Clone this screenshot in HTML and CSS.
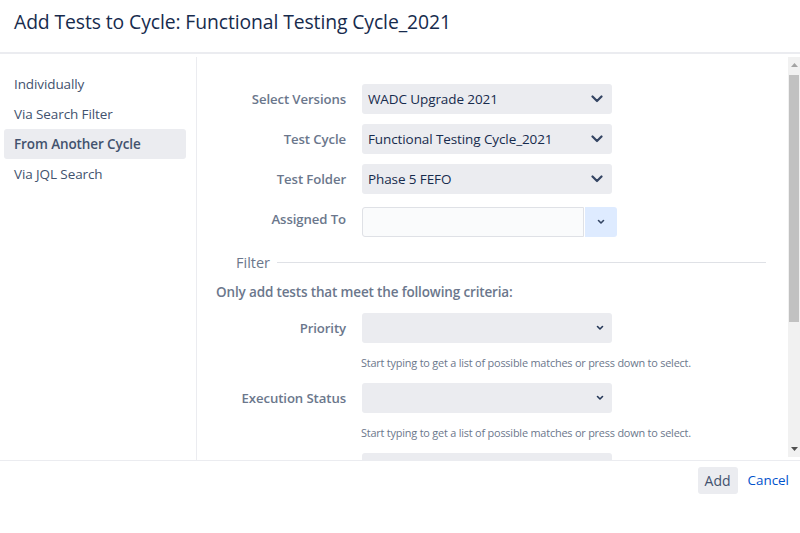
FILE: index.html
```html
<!DOCTYPE html>
<html>
<head>
<meta charset="utf-8">
<link rel="stylesheet" href="styles.css">
</head>
<body>
<div class="dialog">
  <header class="dlg-header">
    <h2 class="dlg-title">Add Tests to Cycle: Functional Testing Cycle_2021</h2>
  </header>
  <div class="dlg-body">
    <nav class="side">
      <a class="side-item">Individually</a>
      <a class="side-item">Via Search Filter</a>
      <a class="side-item active">From Another Cycle</a>
      <a class="side-item">Via JQL Search</a>
    </nav>
    <div class="panel">
      <div class="panel-content">
        <div class="row">
          <label class="lbl">Select Versions</label>
          <div class="select big"><span>WADC Upgrade 2021</span>
            <svg class="chev" width="12" height="8" viewBox="0 0 12 8"><path d="M1.5 1.5 6 6l4.5-4.5" fill="none" stroke="#344563" stroke-width="2.2" stroke-linecap="round" stroke-linejoin="round"/></svg>
          </div>
        </div>
        <div class="row">
          <label class="lbl">Test Cycle</label>
          <div class="select big"><span>Functional Testing Cycle_2021</span>
            <svg class="chev" width="12" height="8" viewBox="0 0 12 8"><path d="M1.5 1.5 6 6l4.5-4.5" fill="none" stroke="#344563" stroke-width="2.2" stroke-linecap="round" stroke-linejoin="round"/></svg>
          </div>
        </div>
        <div class="row">
          <label class="lbl">Test Folder</label>
          <div class="select big"><span>Phase 5 FEFO</span>
            <svg class="chev" width="12" height="8" viewBox="0 0 12 8"><path d="M1.5 1.5 6 6l4.5-4.5" fill="none" stroke="#344563" stroke-width="2.2" stroke-linecap="round" stroke-linejoin="round"/></svg>
          </div>
        </div>
        <div class="row assigned">
          <label class="lbl lbl-up">Assigned To</label>
          <div class="combo">
            <div class="combo-input"></div>
            <div class="combo-btn">
              <svg width="8" height="6" viewBox="0 0 8 6"><path d="M1.5 1.5 4 4l2.5-2.5" fill="none" stroke="#344563" stroke-width="1.6" stroke-linecap="round" stroke-linejoin="round"/></svg>
            </div>
          </div>
        </div>

        <div class="filter-head">
          <span class="filter-title">Filter</span>
          <span class="filter-line"></span>
        </div>
        <p class="criteria">Only add tests that meet the following criteria:</p>

        <div class="group">
          <div class="row">
            <label class="lbl">Priority</label>
            <div class="select small">
              <svg class="chev-s" width="8" height="6" viewBox="0 0 8 6"><path d="M1.5 1.5 4 4l2.5-2.5" fill="none" stroke="#253858" stroke-width="1.6" stroke-linecap="round" stroke-linejoin="round"/></svg>
            </div>
          </div>
          <div class="help">Start typing to get a list of possible matches or press down to select.</div>
        </div>
        <div class="group">
          <div class="row">
            <label class="lbl">Execution Status</label>
            <div class="select small">
              <svg class="chev-s" width="8" height="6" viewBox="0 0 8 6"><path d="M1.5 1.5 4 4l2.5-2.5" fill="none" stroke="#253858" stroke-width="1.6" stroke-linecap="round" stroke-linejoin="round"/></svg>
            </div>
          </div>
          <div class="help">Start typing to get a list of possible matches or press down to select.</div>
        </div>
        <div class="group">
          <div class="row">
            <span class="lbl"></span>
            <div class="select small"></div>
          </div>
        </div>
      </div>
      <div class="scrollbar">
        <div class="sb-btn"><svg width="7" height="4" viewBox="0 0 7 4"><path d="M0 4 3.5 0 7 4z" fill="#a3a3a3"/></svg></div>
        <div class="sb-track"><div class="sb-thumb"></div></div>
        <div class="sb-btn"><svg width="7" height="4" viewBox="0 0 7 4"><path d="M0 0h7L3.5 4z" fill="#505050"/></svg></div>
      </div>
    </div>
  </div>
  <footer class="dlg-footer">
    <button class="btn">Add</button>
    <a class="link">Cancel</a>
  </footer>
</div>
</body>
</html>
```

FILE: styles.css
```css
* { box-sizing: border-box; }
html, body { margin: 0; padding: 0; background: #fff; }
body {
  font-family: "Open Sans", "Noto Sans", sans-serif;
  color: #172b4d;
  width: 800px;
  height: 533px;
  overflow: hidden;
}
.dialog { display: flex; flex-direction: column; height: 533px; }

.dlg-header {
  height: 54px;
  border-bottom: 2px solid #ebecf0;
  padding: 8px 14px 0;
}
.dlg-title {
  margin: 0;
  font-size: 19.35px;
  font-weight: 500;
  line-height: 28px;
  color: #172b4d;
  letter-spacing: -0.1px;
}

.dlg-body { display: flex; height: 406px; }

.side {
  width: 197px;
  flex: none;
  border-right: 1px solid #ebecf0;
  padding: 12px 10px 0 4px;
  margin-top: 3px;
  display: flex;
  flex-direction: column;
}
.side-item {
  display: block;
  height: 30px;
  line-height: 30px;
  padding-left: 10px;
  font-size: 13.5px;
  color: #42526e;
  border-radius: 3px;
  letter-spacing: -0.1px;
}
.side-item.active { background: #ebecf0; font-weight: 600; color: #42526e; }

.panel { flex: 1; display: flex; padding-top: 3px; min-width: 0; }
.panel-content {
  flex: 1;
  overflow: hidden;
  padding: 27px 22px 0 19px;
}

.row { display: flex; align-items: center; height: 30px; margin-bottom: 10px; }
.row.assigned { margin-top: 13px; margin-bottom: 0; }
.lbl {
  width: 130px;
  flex: none;
  text-align: right;
  font-size: 13.2px;
  font-weight: 600;
  color: #6b778c;
  margin-right: 16px;
  letter-spacing: -0.1px;
}
.lbl-up { margin-bottom: 6px; }
.select {
  width: 250px;
  height: 30px;
  background: #ebecf0;
  border-radius: 3px;
  display: flex;
  align-items: center;
  justify-content: space-between;
  padding: 0 9px 0 6px;
  font-size: 13.5px;
  color: #172b4d;
  letter-spacing: -0.1px;
}
.select.small { justify-content: flex-end; padding-right: 8px; }
.chev { display: block; }
.chev-s { display: block; }

.combo { display: flex; height: 30px; }
.combo-input {
  width: 222px;
  height: 30px;
  background: #fafbfc;
  border: 1px solid #dfe1e6;
  border-radius: 3px 0 0 3px;
}
.combo-btn {
  width: 32px;
  height: 30px;
  margin-left: 1px;
  background: #deebff;
  border-radius: 0 3px 3px 0;
  display: flex;
  align-items: center;
  justify-content: center;
}

.filter-head {
  display: flex;
  align-items: center;
  margin: 15px 0 0 20px;
  height: 20px;
}
.filter-title { font-size: 14.5px; color: #6b778c; margin-right: 7px; }
.filter-line { flex: 1; height: 1px; background: #dfe1e6; }

.criteria {
  margin: 10px 0 11px 0;
  line-height: 20px;
  font-size: 13.5px;
  font-weight: 600;
  color: #6b778c;
  letter-spacing: -0.15px;
}

.group { margin-bottom: 12px; }
.group .row { margin-bottom: 0; }
.help {
  margin: 12px 0 0 145px;
  font-size: 10.9px;
  line-height: 16px;
  color: #6b778c;
  letter-spacing: -0.2px;
}

.scrollbar {
  width: 12px;
  flex: none;
  background: #f1f1f1;
  display: flex;
  flex-direction: column;
  height: 400px;
}
.sb-btn { height: 16px; display: flex; align-items: center; justify-content: center; }
.sb-track { flex: 1; }
.sb-thumb { margin: 2px 1px 0 1px; height: 247px; background: #c1c1c1; }

.dlg-footer {
  border-top: 1px solid #ebecf0;
  display: flex;
  justify-content: flex-end;
  align-items: flex-start;
  padding: 6px 11px 0 0;
  height: 73px;
}
.btn {
  font-family: inherit;
  font-size: 14px;
  color: #42526e;
  background: #ebecf0;
  border: none;
  border-radius: 3px;
  height: 27px;
  padding: 0 7px;
  margin-right: 10px;
}
.link {
  font-size: 13.4px;
  color: #0052cc;
  line-height: 27px;
}
```
